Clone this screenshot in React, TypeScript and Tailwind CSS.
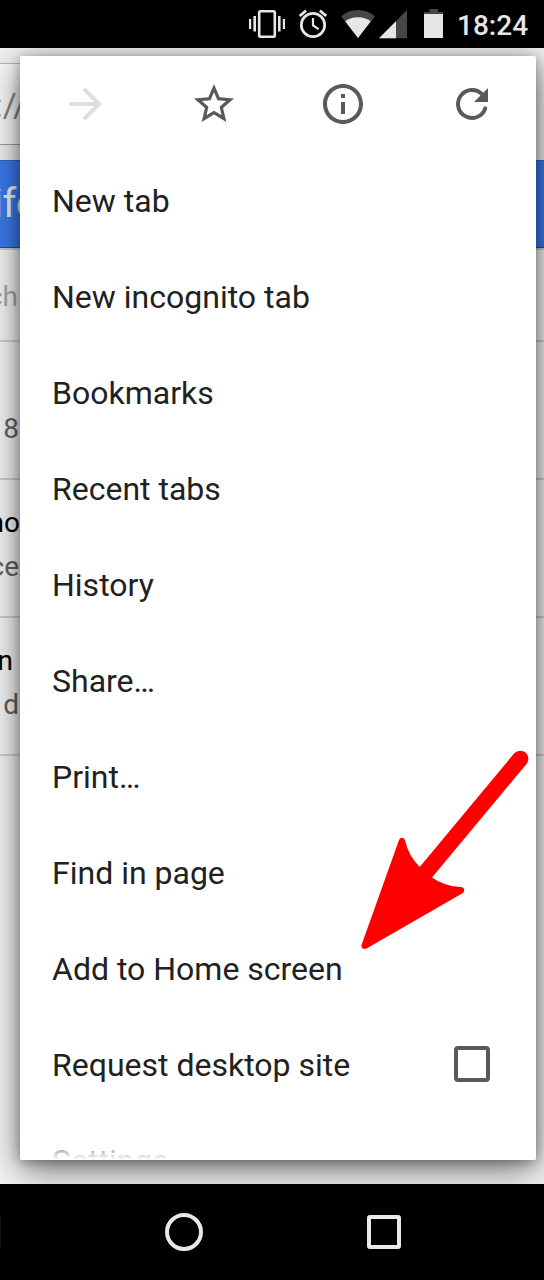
import type { ReactNode } from "react";

const MENU_ITEMS = [
  "New tab",
  "New incognito tab",
  "Bookmarks",
  "Recent tabs",
  "History",
  "Share…",
  "Print…",
  "Find in page",
  "Add to Home screen",
];

function StatusBar() {
  return (
    <header className="flex h-12 shrink-0 items-center bg-black pl-[248px] text-[#e6e6e6]">
      <svg width="38" height="48" viewBox="248 0 38 48" fill="currentColor">
        <rect x="259.2" y="11.2" width="15.6" height="25.6" rx="1.5" fill="none" stroke="currentColor" strokeWidth="2.6" />
        <path d="M249 19h2.2v10H249zM253.4 16h2.6v15.5h-2.6zM278 16h2.6v15.5H278zM282.8 19h2.2v10h-2.2z" />
      </svg>
      <svg className="ml-3" width="30" height="48" viewBox="298 0 30 48" fill="none" stroke="currentColor">
        <circle cx="313" cy="25" r="11.7" strokeWidth="2.7" />
        <path d="M313 18v7.5l5.6 3.6" strokeWidth="2.2" />
        <path d="M299.7 16l6.4-5.3M326.3 16l-6.4-5.3" strokeWidth="2.8" />
      </svg>
      <svg className="ml-[13px]" width="36" height="48" viewBox="341 0 36 48">
        <path d="M358 38L341 16.2Q348.600 10 358 10T375 16.200Z" fill="#464646" />
        <path d="M358 38L345.2 21.300Q350.600 17.200 358 17.200T370.800 21.300Z" fill="currentColor" />
      </svg>
      <svg className="ml-[2px]" width="28" height="48" viewBox="379 0 28 48">
        <path d="M379 38.300L407 10v28.300z" fill="#464646" />
        <path d="M379 38.300L396 21.300v17z" fill="currentColor" />
      </svg>
      <svg className="ml-[17px]" width="19" height="48" viewBox="424 0 19 48">
        <path d="M429.500 9h8.500v3h5v3h-19v-3h5.500z" fill="#464646" />
        <path d="M424 14h19v24h-19z" fill="currentColor" />
      </svg>
      <span className="ml-[14px] mt-1 text-[28px] leading-none font-medium">18:24</span>
    </header>
  );
}

function ListRow({ title, detail, inset }: { title?: string; detail: string; inset: string }) {
  return (
    <div className="h-[138px] border-b-2 border-[#d0d0d0] pt-[21px] text-[28px] leading-[44px]">
      <div className="flex w-5 justify-end whitespace-nowrap">
        <span className={"text-black " + inset}>{title ?? "\u00a0"}</span>
      </div>
      <div className="flex w-[19px] justify-end whitespace-nowrap text-[#636363]">{detail}</div>
    </div>
  );
}

function PageBehind() {
  return (
    <div className="h-full w-full overflow-hidden bg-[#f5f5f5]">
      <div className="h-28 bg-[#f0f0f0] pt-[15px]">
        <div className="flex h-[82px] w-[400px] items-center border-y border-[#b8b8b8] border-b-[#a0a0a0] bg-[#f9f9f9]">
          <div className="flex w-[27px] justify-end pt-[2px] text-[34px] whitespace-nowrap text-[#858585]">://</div>
        </div>
      </div>
      <div className="flex h-[88px] items-center border-y border-t-[#3266c4] border-b-[#0d50c4] bg-[#3b7bec] text-[40px] text-[#f2f2f2]">
        <div className="flex w-[38px] justify-end tracking-[-0.6px] whitespace-nowrap">ifo</div>
      </div>
      <div className="h-[94px] border-y-2 border-[#d0d0d0] border-t-[#cdcdcd] text-[28px] leading-[94px] text-[#a8a8a8]">
        <div className="flex h-[90px] w-[18px] justify-end whitespace-nowrap">ch</div>
      </div>
      <ListRow detail="8" inset="" />
      <ListRow title="no" detail="ce" inset="" />
      <ListRow title="n" detail="d" inset="mr-[7px]" />
    </div>
  );
}

function IconCell({ children }: { children: ReactNode }) {
  return (
    <button className="flex flex-1 items-center justify-center text-[#5a5a5a]">
      <svg width="48" height="48" viewBox="0 0 24 24" fill="currentColor">
        {children}
      </svg>
    </button>
  );
}

function Menu() {
  return (
    <div className="absolute top-2 right-2 bottom-6 left-5 rounded-[2px] bg-white shadow-[0_10px_36px_rgba(0,0,0,0.55),0_2px_12px_rgba(0,0,0,0.3)]">
      <div className="flex h-full flex-col overflow-hidden rounded-[2px]">
        <div className="flex h-24 shrink-0">
          <IconCell>
            <path d="M5 12H18.700M12.100 5.100l6.900 6.900-6.900 6.900" fill="none" stroke="#dedede" strokeWidth="2" strokeLinecap="round" />
          </IconCell>
          <IconCell>
            <path d="M22 9.240l-7.190-.620L12 2 9.190 8.630 2 9.240l5.460 4.730L5.820 21 12 17.270 18.180 21l-1.630-7.030L22 9.240zM12 15.400l-3.760 2.270 1-4.280-3.320-2.880 4.380-.380L12 6.100l1.710 4.040 4.380.380-3.320 2.880 1 4.280L12 15.400z" />
          </IconCell>
          <IconCell>
            <path d="M11 17h2v-6h-2v6zm1-15C6.480 2 2 6.480 2 12s4.480 10 10 10 10-4.480 10-10S17.520 2 12 2zm0 18c-4.410 0-8-3.590-8-8s3.590-8 8-8 8 3.590 8 8-3.590 8-8 8zM11 9h2V7h-2v2z" />
          </IconCell>
          <IconCell>
            <path d="M18.650 14.200A7 7 0 1 1 17.200 7.300" fill="none" stroke="currentColor" strokeWidth="2" strokeLinecap="round" />
            <path d="M13 11h7V4z" />
          </IconCell>
        </div>
        {MENU_ITEMS.map((label) => (
          <div key={label} className="flex h-24 shrink-0 items-center px-8 pt-[2px] text-[32px] text-[#212121]">
            {label}
          </div>
        ))}
        <div className="flex h-24 shrink-0 items-center justify-between pr-[46px] pl-8 text-[32px] text-[#212121]">
          <span className="pt-[2px]">Request desktop site</span>
          <span className="size-9 rounded-[4px] border-4 border-[#5a5a5a]" />
        </div>
        <div className="relative h-12 shrink-0 overflow-hidden px-8 pt-px text-[32px] leading-[96px] text-[#212121]">
          Settings
          <div className="absolute inset-x-0 bottom-0 h-[26px] bg-linear-to-b from-white/10 to-white" />
        </div>
      </div>
    </div>
  );
}

function NavBar() {
  return (
    <nav className="flex h-24 shrink-0 items-center bg-black">
      <span className="h-8 w-px bg-[#151515]" />
      <span className="ml-[164px] size-[38px] rounded-full border-4 border-[#e8e8e8]" />
      <span className="ml-[164px] size-[34px] rounded-[3px] border-4 border-[#e8e8e8]" />
    </nav>
  );
}

export default function App() {
  return (
    <div className="relative flex h-[1280px] w-[544px] flex-col overflow-hidden font-['Roboto',sans-serif]">
      <StatusBar />
      <main className="relative flex-1 overflow-hidden">
        <PageBehind />
        <Menu />
      </main>
      <NavBar />
      <svg className="absolute top-[740px] left-[340px]" width="204" height="220" viewBox="0 0 204 220" fill="#ff0000">
        <path d="M174.300 13.300A8 8 0 0 1 186.300 24.300L92 137.500Q104 146.300 121 147Q124.500 147.600 124.200 150.500Q124 152.300 122.500 153.300L26.500 208.500Q24 209.700 22.200 208Q21 206.500 21.700 204.500L59 100Q60 97.700 62.200 97.700Q64.300 97.800 65 100.300Q68.500 116 79.700 127Z" />
      </svg>
    </div>
  );
}
